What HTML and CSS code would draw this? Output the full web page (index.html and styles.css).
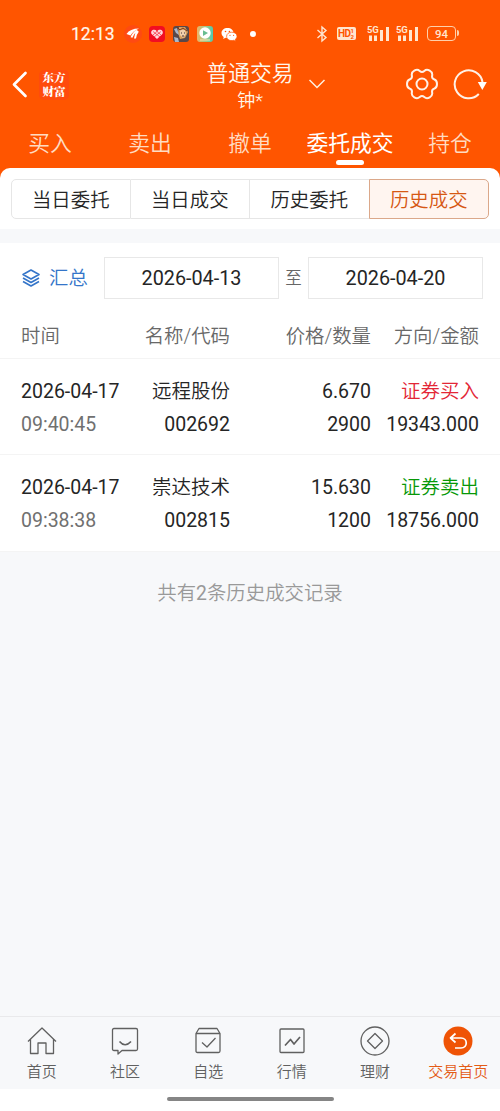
FILE: index.html
```html
<!DOCTYPE html>
<html lang="zh-CN">
<head>
<meta charset="utf-8">
<title>历史成交</title>
<link rel="stylesheet" href="styles.css">
</head>
<body>
<div class="app">
  <header class="header">
    <div class="status">
      <span class="clock">12:13</span>
      <div class="notices">
        <svg width="18" height="18" viewBox="0 0 18 18"><circle cx="9" cy="9" r="9" fill="#ff4a12"/><path d="M2.500 9Q6 3.500 15 3.500 9 6 6.500 10.500z" fill="#fff"/><path d="M7.500 12.500Q9.500 7.500 13 5.500M11 13.500Q11.500 9 14 6" stroke="#fff" stroke-width="2" fill="none"/></svg>
        <svg width="18" height="18" viewBox="0 0 18 18"><rect x="1" y="1" width="16" height="16" rx="4" fill="#f20d22"/><path d="M9 14 3.600 9C1.800 6 5.800 2.900 9 6c3.200-3.100 7.200 0 5.400 3z" fill="#ffd8dc"/><path d="M5 6.500 12 12M8 5.500l5 4.500M13 6.500 6 12M10 5.500 5 10" fill="none" stroke="#f20d22" stroke-width=".6"/></svg>
        <svg width="18" height="18" viewBox="0 0 18 18"><rect x="1" y="1" width="16" height="16" rx="3" fill="#594849"/><path d="M7 2h6l3 5-3 6-5 1-2-6z" fill="#d8a05d"/><path d="M8 5h5l1 4-3 4-3-3z" fill="#f1cfac"/><path d="M2 4 5 3l2 7-3-2zM2 12l4 1 1 4H3z" fill="#aab6c8"/><path d="M9 8h1m2 0h1M10 11h2" stroke="#442f34"/><path d="m5 2 3 3 3-2 4 3" fill="none" stroke="#7c331b"/></svg>
        <svg width="18" height="18" viewBox="0 0 18 18"><defs><linearGradient id="play-bg" x1="0" x2="1"><stop stop-color="#ecb468"/><stop offset=".6" stop-color="#9ac98c"/><stop offset="1" stop-color="#4bc9b0"/></linearGradient></defs><rect x="1" y="1" width="16" height="16" rx="3" fill="url(#play-bg)"/><circle cx="9" cy="8" r="5.700" fill="#fff"/><path d="M7 5.200 12 8l-5 3z" fill="#67bd91"/><path d="M4 15h10" stroke="#f7e5b4"/></svg>
        <svg width="18" height="18" viewBox="0 0 18 18"><path d="M7.500 3C4 3 1.500 5.100 1.500 8c0 1.600.9 3 2.200 3.900L3.200 14l2.300-1.200c.6.200 1.300.2 2 .2 3.500 0 6-2.100 6-5s-2.500-5-6-5" fill="#fff"/><path d="M11.800 7.200c3 0 5.200 1.700 5.200 4.100 0 1.300-.7 2.500-1.800 3.200l.4 1.700-1.900-.9c-3.900 1.100-7.100-1-7.100-4 0-2.400 2.200-4.100 5.200-4.100" fill="#fff" stroke="#ff5500" stroke-width=".7"/><g fill="#ff5500"><circle cx="5.500" cy="6.500" r=".8"/><circle cx="9.400" cy="6.500" r=".8"/><circle cx="10" cy="10.300" r=".6"/><circle cx="13.600" cy="10.300" r=".6"/></g></svg>
        <span class="dot"></span>
      </div>
      <div class="signals">
        <svg class="bluetooth" width="12" height="18" viewBox="0 0 12 18"><path d="m1.500 5 8.500 7.500L6 16V2l4 3.500L1.500 13" fill="none" stroke="#ffe6d0" stroke-width="1.400"/></svg>
        <span class="hd">HD<span class="hd-sims"><i>1</i><i>2</i></span></span>
        <div class="signal"><span>5G</span><svg width="24" height="16" viewBox="0 0 24 16"><path d="M3.500 9.500V15M8.500 9.500V15M14.500 4V15M20.500 1V15" stroke="#ffe6d0" stroke-width="3"/></svg></div>
        <div class="signal"><span>5G</span><svg width="24" height="16" viewBox="0 0 24 16"><path d="M3.500 9.500V15M8.500 9.500V15M14.500 4V15M20.500 1V15" stroke="#ffe6d0" stroke-width="3"/></svg></div>
        <span class="battery">94</span>
      </div>
    </div>
    <div class="titlebar">
      <svg class="back" width="18" height="28" viewBox="0 0 18 28"><path d="M14.500 3 3 14.500 14.500 26" fill="none" stroke="#fff" stroke-width="2.700" stroke-linecap="round" stroke-linejoin="round"/></svg>
      <div class="logo">东方<br>财富</div>
      <div class="account"><h1>普通交易</h1><p>钟*</p></div>
      <svg class="down" width="18" height="12" viewBox="0 0 18 12"><path d="m1.500 2 7.500 7.500L16.500 2" fill="none" stroke="#fff1df" stroke-width="1.500"/></svg>
      <svg class="gear" width="32" height="32" viewBox="0 0 32 32" fill="none" stroke="#fff1e6" stroke-width="2"><path d="M31 16Q31 19.550 28.450 20.500Q25.500 21.500 26.150 24.550Q26.800 27.600 23.700 29.350Q20.600 31.100 18.300 29.050Q16 27 13.700 29.050Q11.400 31.100 8.300 29.350Q5.200 27.600 5.850 24.550Q6.500 21.500 3.550 20.500Q1 19.550 1 16Q1 12.450 3.550 11.500Q6.500 10.500 5.850 7.450Q5.200 4.400 8.300 2.650Q11.400 .9 13.700 2.950Q16 5 18.300 2.950Q20.600 .9 23.700 2.650Q26.800 4.400 26.150 7.450Q25.500 10.500 28.450 11.500Q31 12.450 31 16z"/><circle cx="16" cy="16" r="5.500"/></svg>
      <svg class="refresh" width="34" height="32" viewBox="0 0 34 32"><path d="M25.800 26A14 14 0 1 1 29.500 14" fill="none" stroke="#fff1e6" stroke-width="2"/><path d="M24.800 14h9l-4.500 8z" fill="#fff"/></svg>
    </div>
    <nav class="tabs">
      <a>买入</a><a>卖出</a><a>撤单</a><a class="active">委托成交</a><a>持仓</a>
    </nav>
  </header>
  <section class="segment-panel">
    <div class="segments"><a>当日委托</a><a>当日成交</a><a>历史委托</a><a class="active">历史成交</a></div>
  </section>
  <main class="records">
    <div class="filters">
      <svg class="layers" width="20" height="20" viewBox="0 0 20 20" fill="none" stroke="#3475c9" stroke-width="1.600" stroke-linejoin="round"><path d="m10 2 8 4.500-8 4.500-8-4.500zM2 10l8 4.500 8-4.500M2 13.500l8 4.500 8-4.500"/></svg>
      <span class="summary">汇总</span>
      <span class="date">2026-04-13</span>
      <span class="to">至</span>
      <span class="date">2026-04-20</span>
    </div>
    <div class="grid heads"><span>时间</span><span>名称/代码</span><span>价格/数量</span><span>方向/金额</span></div>
    <div class="grid trade">
      <span>2026-04-17</span><span class="name">远程股份</span><span>6.670</span><span class="name buy">证券买入</span>
      <span class="time">09:40:45</span><span>002692</span><span>2900</span><span>19343.000</span>
    </div>
    <div class="grid trade">
      <span>2026-04-17</span><span class="name">崇达技术</span><span>15.630</span><span class="name sell">证券卖出</span>
      <span class="time">09:38:38</span><span>002815</span><span>1200</span><span>18756.000</span>
    </div>
  </main>
  <p class="total">共有<span class="count">2</span>条历史成交记录</p>
  <nav class="bottom">
    <a><svg width="32" height="32" viewBox="0 0 32 32"><path d="M2 16.500 16 3l14 13.500M4.500 14.500V28.500h7.500V18h8v10.500h7.500v-14"/></svg>首页</a>
    <a><svg width="32" height="32" viewBox="0 0 32 32"><path d="M5 3.500h22q1.500 0 1.500 1.500v19q0 1.500-1.500 1.500H13l-4 3.500v-3.500H5q-1.500 0-1.500-1.500V5q0-1.500 1.500-1.500"/><path d="M10.500 16.500q5.500 6.500 11.500 0" stroke-width="1.700"/></svg>社区</a>
    <a><svg width="32" height="32" viewBox="0 0 32 32"><path d="M4 8.500h24v17.500q0 1.500-1.500 1.500h-21Q4 27.500 4 26zl3-5h18l3 5"/><path d="m10 17.500 5 4.500 8.500-9"/></svg>自选</a>
    <a><svg width="32" height="32" viewBox="0 0 32 32"><rect x="4" y="4" width="24" height="23.500" rx="1"/><path d="m9 20.500 5.500-6 3.500 4.500 6-7" stroke-width="1.700"/></svg>行情</a>
    <a><svg width="32" height="32" viewBox="0 0 32 32"><circle cx="16" cy="16" r="14"/><path d="m16 8.500 7.500 7.500-7.500 7.500L8.500 16z"/></svg>理财</a>
    <a class="active"><svg width="32" height="32" viewBox="0 0 32 32"><circle cx="16" cy="16" r="14.500" fill="#ef5305" stroke="none"/><path d="M13.500 8.500 8.500 13l5 4.500M9 13h10c7 0 7 10 0 10h-6" stroke="#fff" stroke-width="1.700"/></svg>交易首页</a>
  </nav>
  <div class="gesture"><span></span></div>
</div>
</body>
</html>
```
FILE: styles.css
```css
* { box-sizing: border-box; }
body { margin: 0; }
h1, p { margin: 0; font-weight: inherit; }
svg { display: block; flex: none; }

.app {
  display: flex;
  flex-direction: column;
  width: 500px;
  height: 1111px;
  background: #f7f8fa;
  color: #252525;
  font: 350 19.4px/28px Roboto, "Noto Sans CJK SC", sans-serif;
  white-space: nowrap;
  overflow: hidden;
}

.header { height: 180px; flex: none; background: #ff5500; color: #fff7ec; }
.status { display: flex; align-items: center; height: 55px; padding: 12px 43px 0 71px; }
.clock { width: 53px; font-size: 17.5px; font-weight: 400; line-height: 22px; -webkit-text-stroke: .2px; }
.notices { display: flex; gap: 6px; }
.dot { width: 6px; height: 6px; margin: 6px; border-radius: 50%; background: #fff; }
.signals { display: flex; align-items: center; margin-left: 54px; color: #ffe6d0; }
.hd { display: flex; width: 19px; height: 13px; margin-left: 9px; padding-left: 1px; border-radius: 2px; background: #ffe6d0; color: #ff5500; font-size: 10px; font-weight: 700; line-height: 13px; letter-spacing: -.5px; }
.hd-sims { display: grid; grid-template-rows: 6px 6px; font-size: 6px; line-height: 7px; }
.hd-sims i { font-style: normal; }
.signal { display: grid; width: 24px; margin-left: 11px; }
.signal + .signal { margin-left: 5px; }
.signal > * { grid-area: 1 / 1; }
.signal span { z-index: 1; margin-top: -1px; font-size: 9.5px; font-weight: 700; line-height: 9px; letter-spacing: -.3px; }
.battery { display: flex; align-items: center; justify-content: center; position: relative; width: 29px; height: 15px; margin-left: 7px; border: 1.5px solid #ffd0aa; border-radius: 4px; font-size: 11.5px; font-weight: 500; line-height: 12px; }
.battery::after { content: ""; position: absolute; right: -4px; top: 3px; width: 2px; height: 6px; border-radius: 0 2px 2px 0; background: #ffd0aa; }

.titlebar { display: flex; align-items: flex-start; height: 61px; padding-left: 11px; }
.back { margin-top: 15px; }
.logo { width: 30px; height: 30px; margin: 15px 0 0 10px; padding-top: 1px; border-radius: 5px; background: #ff4b0c; color: #fff; font: 900 11.5px/13.500px "Noto Serif CJK SC", "Noto Sans CJK SC", serif; text-align: center; }
.account { width: 90px; margin-left: 136px; padding-top: 4px; text-align: center; }
.account h1 { font-size: 21.8px; line-height: 30px; }
.account p { font-size: 18px; line-height: 24px; }
.down { margin: 23px 0 0 13px; }
.gear { margin: 13px 0 0 80px; }
.refresh { margin: 13px 0 0 15px; }

.tabs { display: grid; grid-template-columns: repeat(5, 100px); color: #ffdcc2; font-size: 21.8px; line-height: 56px; text-align: center; }
.tabs .active { display: flex; flex-direction: column; align-items: center; color: #fff; font-weight: 400; }
.tabs .active::after { content: ""; width: 28px; height: 4.500px; margin-top: -12px; border-radius: 3px; background: #fff; }

.segment-panel { position: relative; height: 61px; flex: none; margin-top: -12px; padding: 11px; border-radius: 10px 10px 0 0; background: #fff; }
.segments { display: grid; grid-template-columns: repeat(4, 1fr); height: 40px; text-align: center; }
.segments a { height: 40px; border: 1px solid #e6e6e6; border-left-width: 0; line-height: 41px; }
.segments a:first-child { border-left-width: 1px; border-radius: 5px 0 0 5px; }
.segments .active { margin-left: -1px; border: 1px solid #dba88a; border-radius: 0 5px 5px 0; background: #fff5f0; color: #d65814; }

.records { flex: none; height: 308px; margin-top: 14px; background: #fff; }
.filters { display: flex; align-items: center; height: 70px; padding-left: 21px; }
.summary { width: 55px; margin-left: 8px; padding-top: 2px; color: #3475c9; }
.date { width: 175px; height: 42px; border: 1px solid #e8e8e8; line-height: 42px; text-align: center; font-size: 19.8px; font-weight: 400; }
.to { width: 29px; padding-top: 1px; text-align: center; font-size: 16.5px; color: #666; }
.grid { display: grid; grid-template-columns: 109px 100px 141px 108px; padding: 0 21px; text-align: right; border-bottom: 1px solid #f4f4f4; }
.grid span:nth-child(4n + 1) { text-align: left; }
.heads { height: 46px; color: #686868; line-height: 48px; }
.trade { height: 96px; padding-top: 16px; grid-template-rows: 33px 33px; line-height: 34px; font-size: 19.500px; font-weight: 400; }
.trade + .trade { height: 97px; }
.trade .name { font-weight: 350; }
.time { color: #707070; }
.buy { color: #e32636; }
.sell { color: #079807; }
.total { flex: 1; padding-top: 29px; text-align: center; color: #999; }
.count { font-weight: 400; }

.bottom { display: grid; grid-template-columns: repeat(6, 1fr); flex: none; height: 73px; border-top: 1px solid #e9e9eb; color: #606060; font-size: 15px; line-height: 31px; }
.bottom a { display: flex; flex-direction: column; align-items: center; padding-top: 8px; }
.bottom svg { fill: none; stroke: #606060; stroke-width: 1.3; stroke-linejoin: round; }
.bottom .active { color: #e45b15; }
.gesture { display: flex; justify-content: center; flex: none; height: 22px; padding-top: 8px; background: #fff; }
.gesture span { width: 167px; height: 4px; border-radius: 2px; background: #858585; }
```
